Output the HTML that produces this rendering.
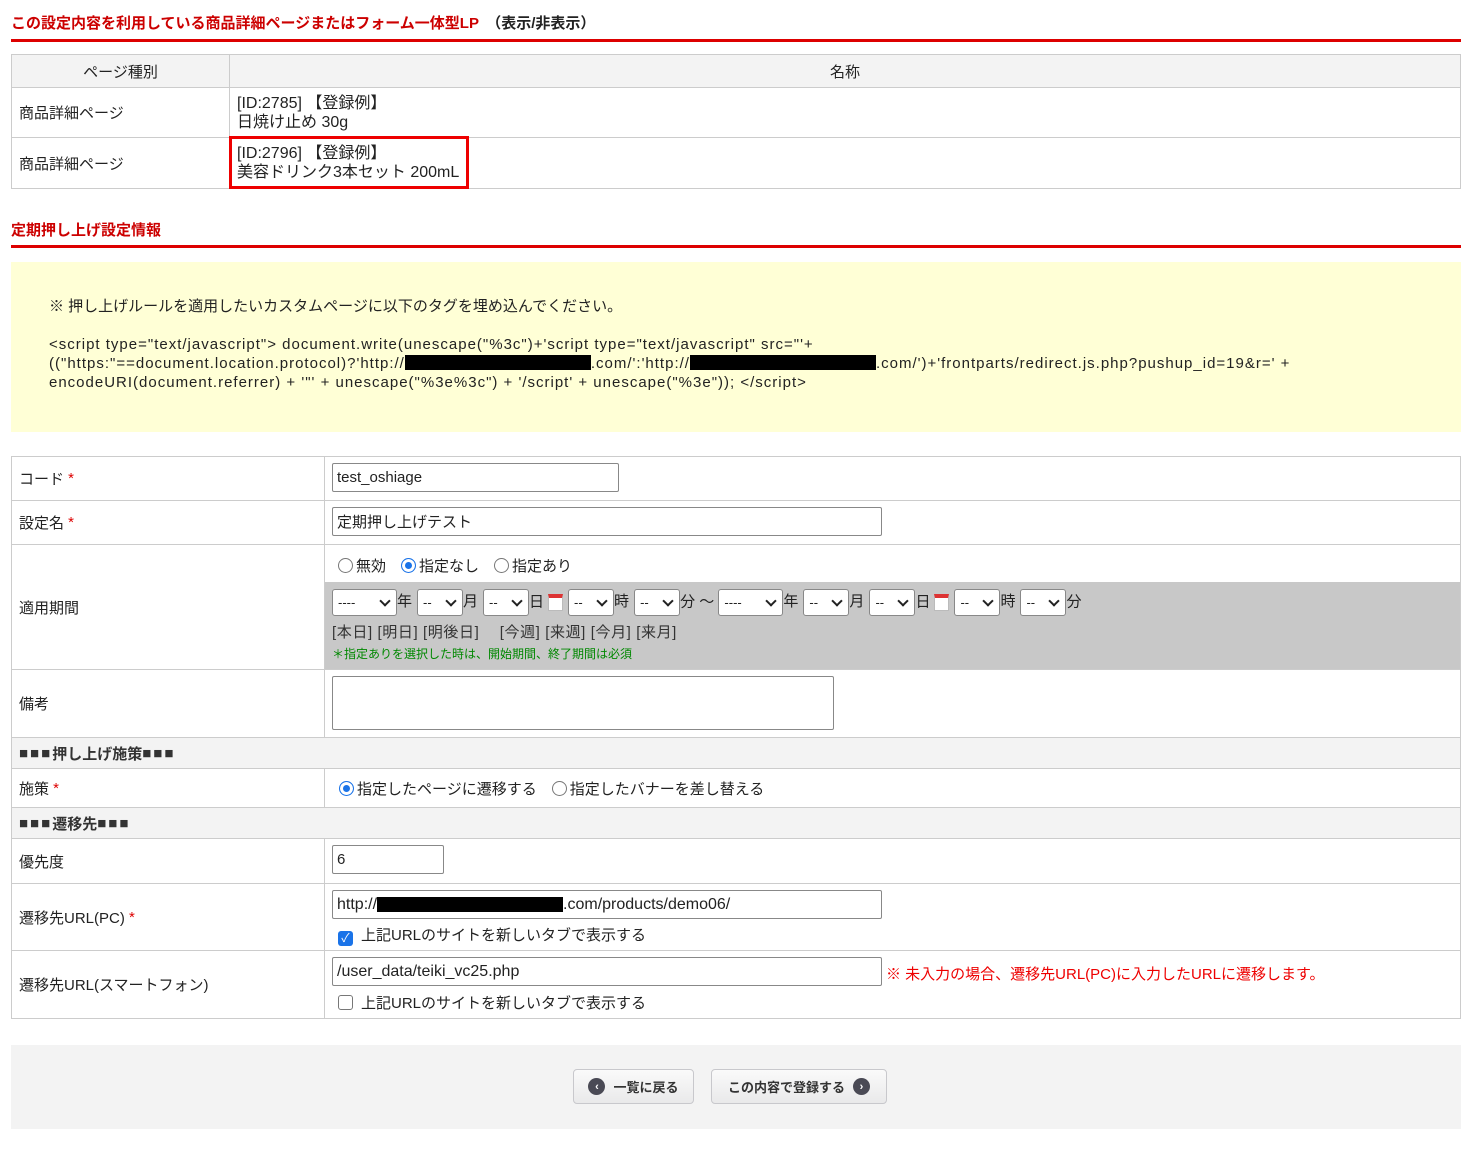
<!DOCTYPE html>
<html><head><meta charset="utf-8"><style>
*{box-sizing:border-box;margin:0;padding:0}
body{width:1475px;height:1151px;background:#fff;font-family:"Liberation Sans","Noto Sans CJK JP",sans-serif;font-size:15px;color:#222;position:relative;overflow:hidden}
.a{position:absolute}
.h{color:#c00;font-weight:bold;font-size:15px}
.rl{height:3px;background:#d00;left:11px;width:1450px}
.c{position:absolute;border:1px solid #ccc;display:flex;align-items:center;padding-left:7px}
.g{background:#f3f3f3}
.in{position:absolute;border:1px solid #888;background:#fff;height:29px;padding-left:4px;font-size:15px;display:flex;align-items:center;border-radius:2px}
.sel{display:inline-block;border:1px solid #888;background:#fff;height:27px;border-radius:3px;font-size:13px;padding:5px 5px;position:relative;vertical-align:middle}
.sel:after{content:"";position:absolute;right:7px;top:7px;width:6px;height:6px;border-right:2px solid #222;border-bottom:2px solid #222;transform:rotate(45deg)}
.cal{display:inline-block;width:15px;height:17px;border:1px solid #bbb;border-top:4px solid #d33;background:#fff;vertical-align:middle;margin:0 5px 0 4px}
.rad{display:inline-block;width:15px;height:15px;border:1px solid #777;border-radius:50%;vertical-align:-2px;margin-right:3px;background:#fff}
.rad.on{border:1px solid #1a73e8;box-shadow:inset 0 0 0 3px #fff;background:#1a73e8}
.star{color:#d00}
.btn{position:absolute;border:1px solid #c8c8cc;border-radius:4px;background:linear-gradient(#fafafa,#e9e9ea);font-weight:bold;font-size:13px;color:#333;display:flex;align-items:center;justify-content:center;gap:8px}
.ic{width:17px;height:17px;border-radius:50%;background:#4a4a55;color:#fff;font-size:11px;display:flex;align-items:center;justify-content:center}
.k{margin-right:5px}
.sec{letter-spacing:2px}
</style></head><body>
<div class="a h" style="left:11px;top:12px">この設定内容を利用している商品詳細ページまたはフォーム一体型LP　<span style="color:#222">（表示/非表示）</span></div>
<div class="a rl" style="top:39px"></div>

<div class="c g" style="left:11px;top:54px;width:219px;height:34px;justify-content:center;padding:0">ページ種別</div>
<div class="c g" style="left:229px;top:54px;width:1232px;height:34px;justify-content:center;padding:0">名称</div>
<div class="c" style="left:11px;top:87px;width:219px;height:51px">商品詳細ページ</div>
<div class="c" style="left:229px;top:87px;width:1232px;height:51px;line-height:19px;font-size:16px">[ID:2785] 【登録例】<br>日焼け止め 30g</div>
<div class="c" style="left:11px;top:137px;width:219px;height:52px">商品詳細ページ</div>
<div class="c" style="left:229px;top:137px;width:1232px;height:52px;line-height:19px;font-size:16px">[ID:2796] 【登録例】<br>美容ドリンク3本セット 200mL</div>
<div class="a" style="left:229px;top:136px;width:240px;height:53px;border:3px solid #e00"></div>

<div class="a h" style="left:11px;top:219px">定期押し上げ設定情報</div>
<div class="a rl" style="top:245px"></div>

<div class="a" style="left:11px;top:262px;width:1450px;height:170px;background:#ffffd6;padding:35px 0 0 38px;font-size:15px;line-height:19px">
※ 押し上げルールを適用したいカスタムページに以下のタグを埋め込んでください。<br><br>
<span style="letter-spacing:1px">&lt;script type="text/javascript"&gt; document.write(unescape("%3c")+'script type="text/javascript" src="'+<br>
(("https:"==document.location.protocol)?'http://<span style="background:#000;display:inline-block;width:186px;height:15px;vertical-align:-2px"></span>.com/':'http://<span style="background:#000;display:inline-block;width:186px;height:15px;vertical-align:-2px"></span>.com/')+'frontparts/redirect.js.php?pushup_id=19&amp;r=' +<br>
encodeURI(document.referrer) + '"' + unescape("%3e%3c") + '/script' + unescape("%3e")); &lt;/script&gt;</span>
</div>

<div class="c" style="left:11px;top:456px;width:314px;height:45px">コード <span class="star">&nbsp;*</span></div>
<div class="c" style="left:324px;top:456px;width:1137px;height:45px"></div>
<div class="in" style="left:332px;top:463px;width:287px">test_oshiage</div>
<div class="c" style="left:11px;top:500px;width:314px;height:45px">設定名 <span class="star">&nbsp;*</span></div>
<div class="c" style="left:324px;top:500px;width:1137px;height:45px"></div>
<div class="in" style="left:332px;top:507px;width:550px">定期押し上げテスト</div>
<div class="c" style="left:11px;top:544px;width:314px;height:126px">適用期間</div>
<div class="c" style="left:324px;top:544px;width:1137px;height:126px"></div>
<div class="a" style="left:338px;top:555px"><span class="rad"></span>無効　<span class="rad on"></span>指定なし　<span class="rad"></span>指定あり</div>
<div class="a" style="left:325px;top:582px;width:1135px;height:87px;background:#c8c8c8;padding:7px 0 0 7px;font-size:15px;white-space:nowrap">
<span class="sel" style="width:65px">----</span><span class="k">年</span><span class="sel" style="width:46px">--</span><span class="k">月</span><span class="sel" style="width:46px">--</span>日<span class="cal"></span><span class="sel" style="width:46px">--</span><span class="k">時</span><span class="sel" style="width:46px">--</span>分 ～ <span class="sel" style="width:65px">----</span><span class="k">年</span><span class="sel" style="width:46px">--</span><span class="k">月</span><span class="sel" style="width:46px">--</span>日<span class="cal"></span><span class="sel" style="width:46px">--</span><span class="k">時</span><span class="sel" style="width:46px">--</span>分
<div style="margin-top:5px;font-size:15px;color:#333;letter-spacing:0.6px">[本日] [明日] [明後日]　 [今週] [来週] [今月] [来月]</div>
<div style="margin-top:3px;font-size:12px;color:#080">＊指定ありを選択した時は、開始期間、終了期間は必須</div>
</div>
<div class="c" style="left:11px;top:669px;width:314px;height:69px">備考</div>
<div class="c" style="left:324px;top:669px;width:1137px;height:69px"></div>
<div class="a" style="left:332px;top:676px;width:502px;height:54px;border:1px solid #888;border-radius:2px;background:#fff"></div>
<div class="c g" style="left:11px;top:737px;width:1450px;height:32px;font-weight:bold;color:#333"><span class="sec">■■■</span>押し上げ施策<span class="sec">■■■</span></div>
<div class="c" style="left:11px;top:768px;width:314px;height:40px">施策 <span class="star">&nbsp;*</span></div>
<div class="c" style="left:324px;top:768px;width:1137px;height:40px;padding-left:14px"><span class="rad on"></span>指定したページに遷移する　<span class="rad"></span>指定したバナーを差し替える</div>
<div class="c g" style="left:11px;top:807px;width:1450px;height:32px;font-weight:bold;color:#333"><span class="sec">■■■</span>遷移先<span class="sec">■■■</span></div>
<div class="c" style="left:11px;top:838px;width:314px;height:46px">優先度</div>
<div class="c" style="left:324px;top:838px;width:1137px;height:46px"></div>
<div class="in" style="left:332px;top:845px;width:112px">6</div>
<div class="c" style="left:11px;top:883px;width:314px;height:68px">遷移先URL(PC) <span class="star">&nbsp;*</span></div>
<div class="c" style="left:324px;top:883px;width:1137px;height:68px"></div>
<div class="in" style="left:332px;top:890px;width:550px;font-size:16px">http://<span style="background:#000;display:inline-block;width:186px;height:15px"></span>.com/products/demo06/</div>
<div class="a" style="left:338px;top:924px"><span style="display:inline-block;width:15px;height:15px;background:#1a73e8;border-radius:3px;color:#fff;font-size:12px;line-height:15px;text-align:center;vertical-align:-2px;margin-right:8px">✓</span>上記URLのサイトを新しいタブで表示する</div>
<div class="c" style="left:11px;top:950px;width:314px;height:69px">遷移先URL(スマートフォン)</div>
<div class="c" style="left:324px;top:950px;width:1137px;height:69px"></div>
<div class="in" style="left:332px;top:957px;width:550px;font-size:16px">/user_data/teiki_vc25.php</div>
<div class="a" style="left:886px;top:963px;color:#e00">※ 未入力の場合、遷移先URL(PC)に入力したURLに遷移します。</div>
<div class="a" style="left:338px;top:992px"><span style="display:inline-block;width:15px;height:15px;border:1px solid #777;border-radius:3px;vertical-align:-2px;margin-right:8px"></span>上記URLのサイトを新しいタブで表示する</div>

<div class="a" style="left:11px;top:1045px;width:1450px;height:84px;background:#f3f3f3"></div>
<div class="btn" style="left:573px;top:1069px;width:121px;height:35px"><span class="ic">‹</span>一覧に戻る</div>
<div class="btn" style="left:711px;top:1069px;width:176px;height:35px">この内容で登録する<span class="ic">›</span></div>
</body></html>
